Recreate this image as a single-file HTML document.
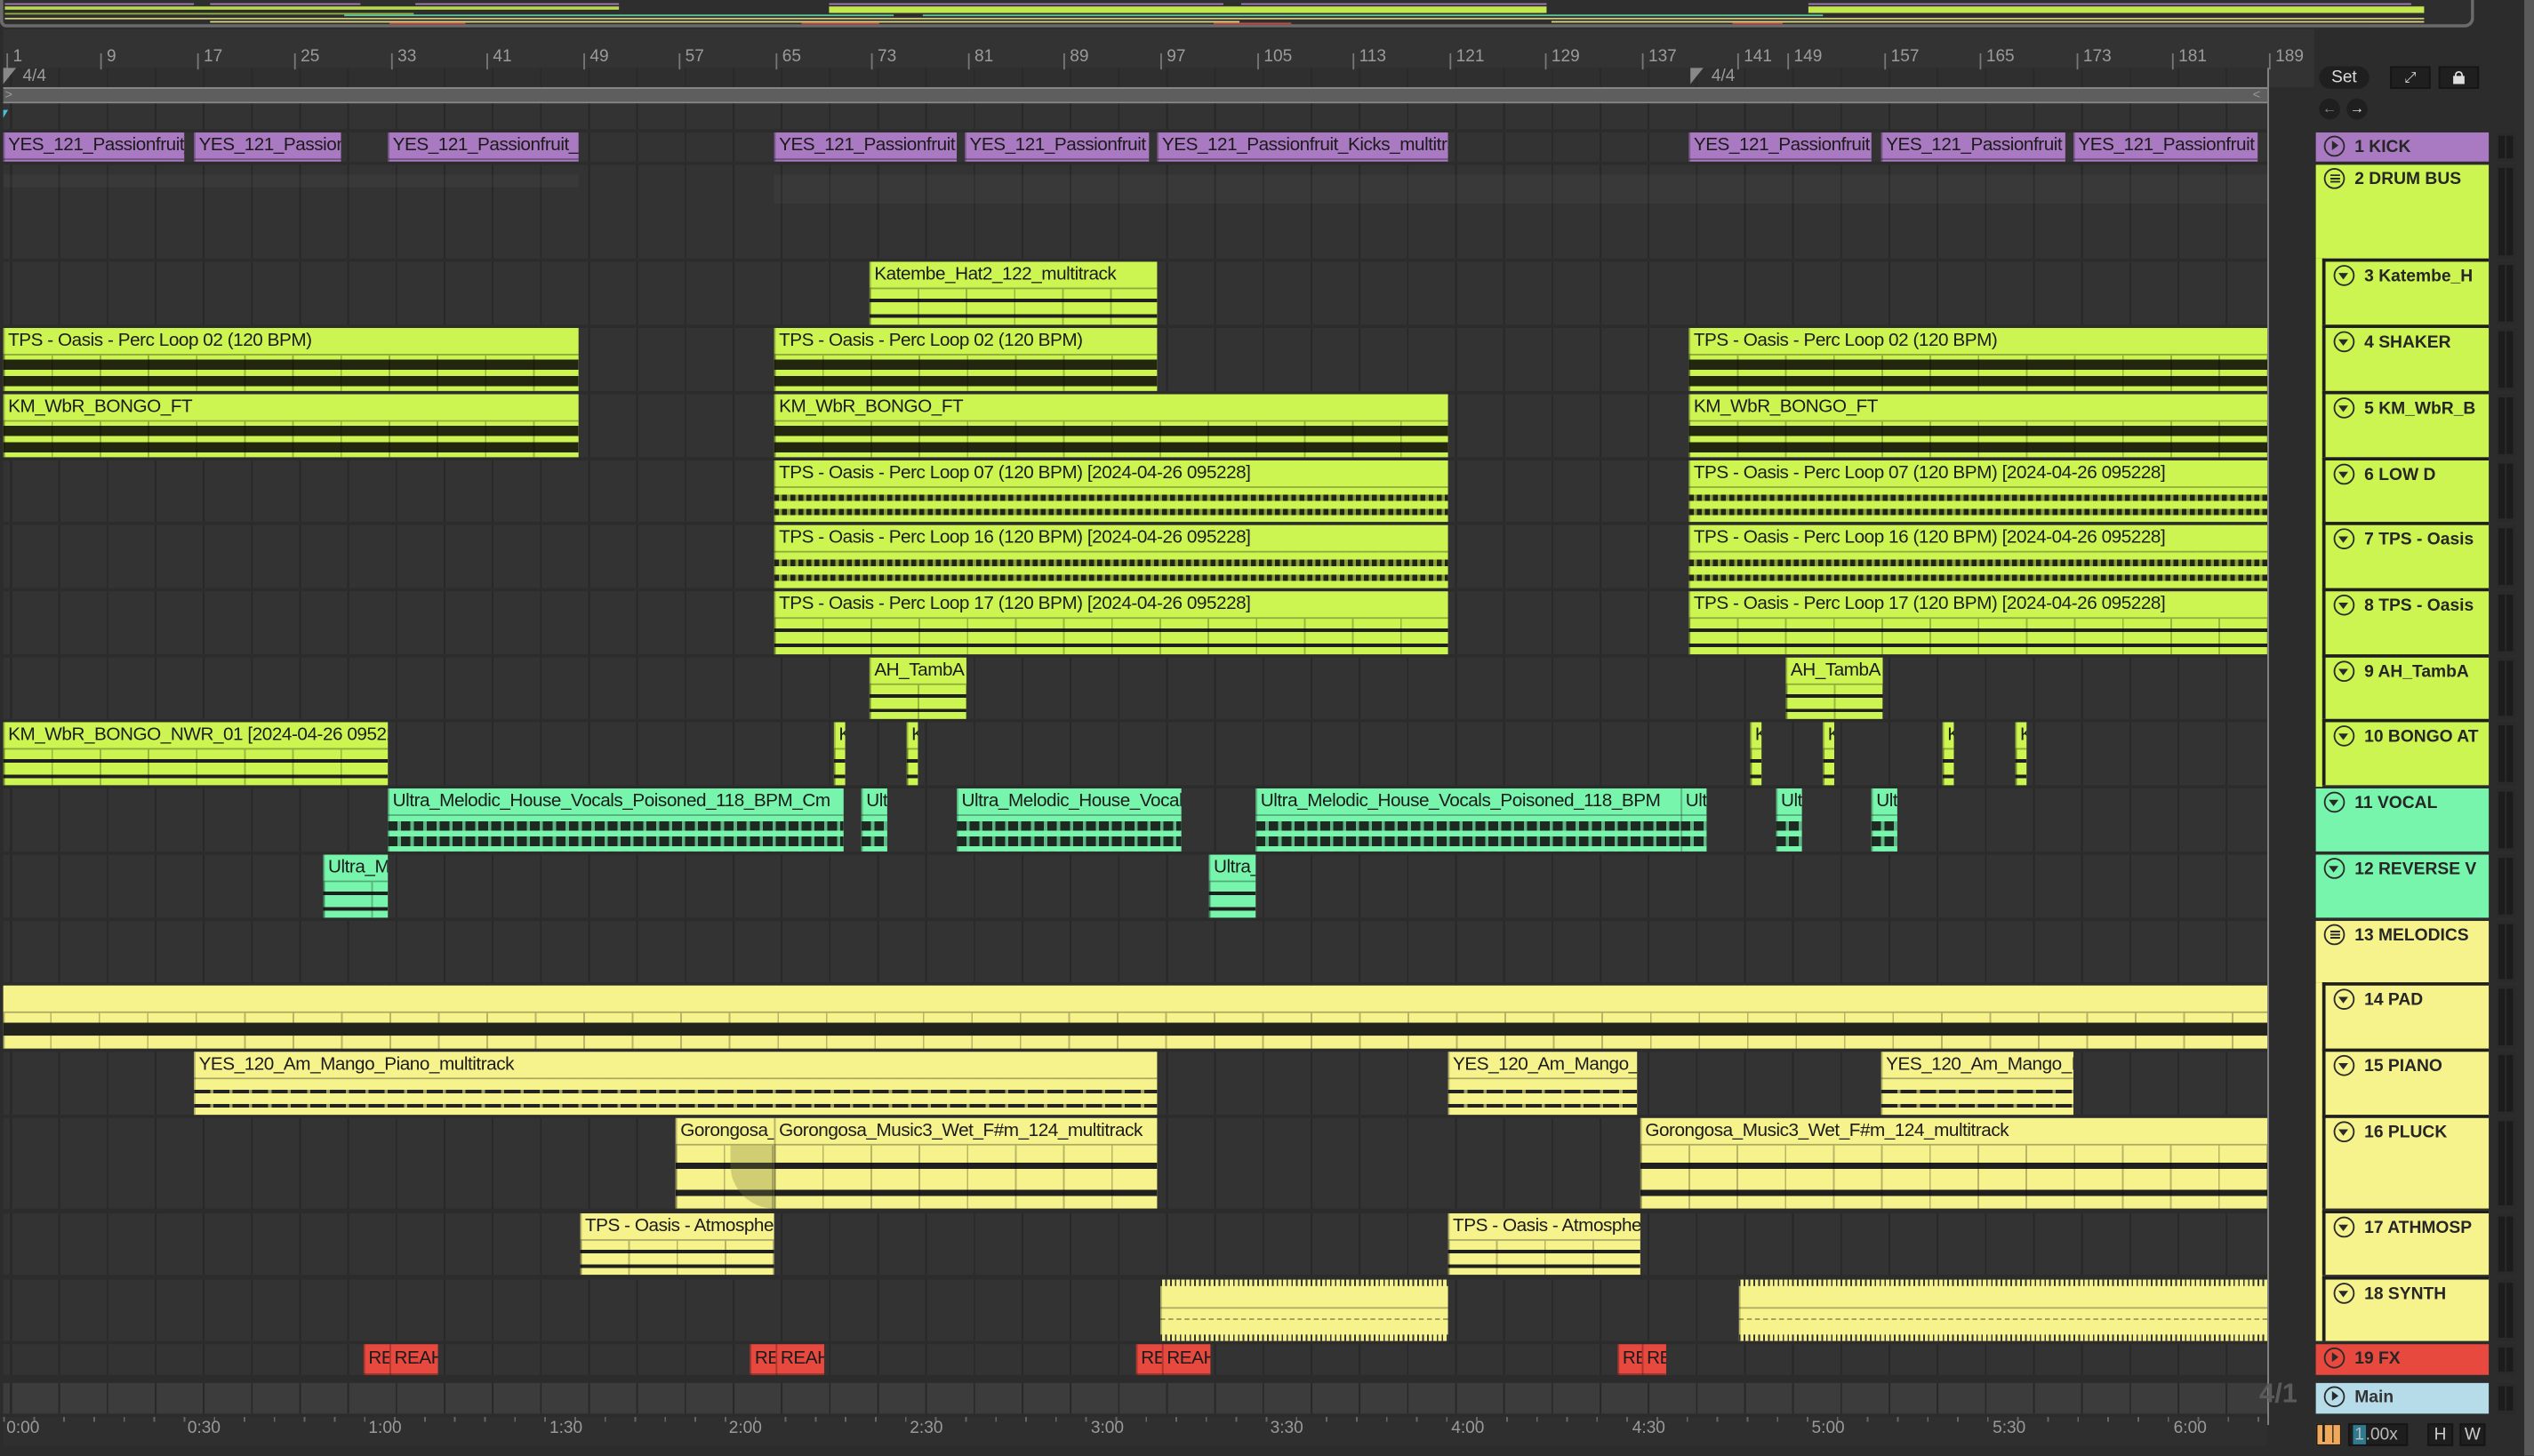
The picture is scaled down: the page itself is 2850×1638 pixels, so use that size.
<!DOCTYPE html>
<html><head><meta charset="utf-8"><style>
*{margin:0;padding:0;box-sizing:border-box}
html,body{width:2850px;height:1638px;overflow:hidden;background:#2c2c2c}
#s{position:absolute;left:0;top:0;width:1568px;height:901.2px;transform:scale(1.81760);transform-origin:0 0;background:#2c2c2c;font-family:"Liberation Sans",sans-serif;overflow:hidden}
.a{position:absolute}
.lane{position:absolute;left:2px;width:1401px;background-color:#333;background-image:repeating-linear-gradient(90deg,#282828 0 1px,transparent 1px 29.8px);background-position:4.4px 0}
.c{position:absolute;overflow:hidden;box-shadow:inset 1px 0 0 rgba(0,0,0,.25)}
.h{position:absolute;left:0;right:0;top:0;height:17px;line-height:17px;font-size:11.4px;color:#1b1b1b;padding-left:3px;white-space:nowrap;border-bottom:1px solid rgba(0,0,0,.3);letter-spacing:-.25px}
.w{position:absolute;left:0;right:0;top:17px;bottom:0}
.P{background:#a979c1}.L{background:#cdf552}.G{background:#78f5ac}.Y{background:#f6f28c}.R{background:#e8493f}
.wd{background-image:repeating-linear-gradient(90deg,rgba(0,0,0,.25) 0 1px,transparent 1px 29.8px),linear-gradient(transparent 12%,#24270f 12% 40%,transparent 40% 58%,#24270f 58% 86%,transparent 86%)}
.wm{background-image:repeating-linear-gradient(90deg,transparent 0 3px,rgba(205,245,82,.6) 3px 5px),linear-gradient(transparent 20%,#202316 20% 38%,transparent 38% 62%,#202316 62% 80%,transparent 80%)}
.wt{background-image:repeating-linear-gradient(90deg,rgba(0,0,0,.25) 0 1px,transparent 1px 29.8px),linear-gradient(transparent 27%,#202020 27% 37%,transparent 37% 70%,#202020 70% 80%,transparent 80%)}
.wg{background-image:repeating-linear-gradient(90deg,transparent 0 6px,rgba(120,245,172,.7) 6px 8px),linear-gradient(transparent 15%,#1d2a22 15% 42%,transparent 42% 58%,#1d2a22 58% 85%,transparent 85%)}
.wy{background-image:repeating-linear-gradient(90deg,transparent 0 10px,rgba(246,242,140,.6) 10px 12px),linear-gradient(transparent 30%,#222 30% 40%,transparent 40% 70%,#222 70% 80%,transparent 80%)}
.th{position:absolute;left:1433px;width:107px;font-weight:bold;font-size:10.6px;color:#262626;white-space:nowrap}
.th span{position:absolute;top:3px;left:24px;line-height:12px}
.ic{position:absolute;left:5px;top:2px;width:13px;height:13px;border:1.3px solid #2a2a2a;border-radius:50%}
.ic.d::after{content:"";position:absolute;left:2.4px;top:3.5px;border-left:3.4px solid transparent;border-right:3.4px solid transparent;border-top:4.5px solid #2a2a2a}
.ic.p::after{content:"";position:absolute;left:4px;top:2.3px;border-top:3.2px solid transparent;border-bottom:3.2px solid transparent;border-left:4.6px solid #2a2a2a}
.ic.g::after{content:"";position:absolute;left:3px;top:3px;width:6px;height:5px;background:linear-gradient(#2a2a2a 0 1px,transparent 1px 2px,#2a2a2a 2px 3px,transparent 3px 4px,#2a2a2a 4px 5px)}
.ch{border-left:2px solid #1e1e1e;border-top:2px solid #1e1e1e;left:1437px;width:103px}
.m{position:absolute;left:1545px;width:12px;background:#2a2a2a}
.m::before,.m::after{content:"";position:absolute;top:2px;bottom:2px;width:4px;background:#1c1c1c}
.m::before{left:1px}.m::after{left:6px}
.rl{position:absolute;top:29px;font-size:10.5px;color:#9b9b9b}
.rl::before{content:"";position:absolute;left:-4px;top:4px;width:1px;height:10px;background:#777}
.tl{position:absolute;top:878px;font-size:10.5px;color:#9a9a9a}
</style></head><body><div id="s">

<div class="a" style="left:0;top:0;width:1531px;height:17px;border:2px solid #6a6a6a;border-top:none;border-radius:0 0 6px 4px;background:#2e2e2e"></div>
<div class="a" style="left:3px;top:2px;width:117px;height:1px;background:#a979c1"></div>
<div class="a" style="left:130px;top:2px;width:93px;height:1px;background:#a979c1"></div>
<div class="a" style="left:257px;top:2px;width:126px;height:1px;background:#a979c1"></div>
<div class="a" style="left:513px;top:2px;width:244px;height:1px;background:#a979c1"></div>
<div class="a" style="left:768px;top:2px;width:189px;height:1px;background:#a979c1"></div>
<div class="a" style="left:1119px;top:2px;width:373px;height:1px;background:#a979c1"></div>
<div class="a" style="left:3px;top:4px;width:380px;height:2px;background:#b6d84a"></div>
<div class="a" style="left:513px;top:4px;width:444px;height:4px;background:#c3e84e"></div>
<div class="a" style="left:1119px;top:4px;width:381px;height:4px;background:#c3e84e"></div>
<div class="a" style="left:3px;top:7.5px;width:253px;height:1px;background:#93b03c"></div>
<div class="a" style="left:213px;top:9px;width:340px;height:1px;background:#5fc99a"></div>
<div class="a" style="left:571px;top:9px;width:557px;height:1px;background:#5fc99a"></div>
<div class="a" style="left:3px;top:11px;width:1497px;height:1px;background:#c9c67a"></div>
<div class="a" style="left:130px;top:12.5px;width:637px;height:1px;background:#d8d47e"></div>
<div class="a" style="left:960px;top:12.5px;width:540px;height:1px;background:#d8d47e"></div>
<div class="a" style="left:241px;top:14px;width:47px;height:1px;background:#c4453c"></div>
<div class="a" style="left:496px;top:14px;width:48px;height:1px;background:#c4453c"></div>
<div class="a" style="left:751px;top:14px;width:48px;height:1px;background:#c4453c"></div>
<div class="a" style="left:1072px;top:14px;width:31px;height:1px;background:#c4453c"></div>

<div class="a" style="left:2px;top:18px;width:1430px;height:36px;background:#333"></div>
<div class="a" style="left:2px;top:42px;width:1401px;height:12px;background:#2f2f2f;background-image:repeating-linear-gradient(90deg,#292929 0 1px,transparent 1px 29.8px);background-position:4.4px 0"></div>
<div class="rl" style="left:8px">1</div><div class="rl" style="left:66px">9</div><div class="rl" style="left:126px">17</div><div class="rl" style="left:186px">25</div><div class="rl" style="left:246px">33</div><div class="rl" style="left:305px">41</div><div class="rl" style="left:365px">49</div><div class="rl" style="left:424px">57</div><div class="rl" style="left:484px">65</div><div class="rl" style="left:543px">73</div><div class="rl" style="left:603px">81</div><div class="rl" style="left:662px">89</div><div class="rl" style="left:722px">97</div><div class="rl" style="left:782px">105</div><div class="rl" style="left:841px">113</div><div class="rl" style="left:901px">121</div><div class="rl" style="left:960px">129</div><div class="rl" style="left:1020px">137</div><div class="rl" style="left:1079px">141</div><div class="rl" style="left:1110px">149</div><div class="rl" style="left:1170px">157</div><div class="rl" style="left:1229px">165</div><div class="rl" style="left:1289px">173</div><div class="rl" style="left:1348px">181</div><div class="rl" style="left:1408px">189</div>
<div class="a" style="left:14px;top:41px;font-size:10.5px;color:#9b9b9b">4/4</div>
<div class="a" style="left:1059px;top:41px;font-size:10.5px;color:#9b9b9b">4/4</div>
<div class="a" style="left:2px;top:42px;border-left:8px solid #888;border-bottom:10px solid transparent"></div>
<div class="a" style="left:1046px;top:42px;border-left:8px solid #888;border-bottom:10px solid transparent"></div>
<div class="a" style="left:2px;top:54px;width:1401px;height:10px;background:#5e5e5e;border-top:1px solid #8a8a8a;border-bottom:1px solid #8a8a8a"></div>
<div class="a" style="left:3px;top:55px;font-size:8px;color:#999;line-height:8px">&gt;</div>
<div class="a" style="left:1394px;top:55px;font-size:8px;color:#999;line-height:8px">&lt;</div>
<div class="lane" style="top:64px;height:16px"></div>
<div class="a" style="left:2px;top:68px;border-top:5px solid #4ac0d8;border-right:3px solid transparent"></div>

<div class="a" style="left:1435px;top:41px;width:31px;height:14px;border-radius:7px;background:#1f1f1f;color:#ddd;font-size:10.5px;text-align:center;line-height:14px">Set</div>
<div class="a" style="left:1479px;top:41px;width:25px;height:14px;background:#1f1f1f;border:1px solid #151515;color:#ddd;font-size:9px;text-align:center;line-height:12px">&#x2922;</div>
<div class="a" style="left:1509px;top:41px;width:25px;height:14px;background:#1f1f1f;border:1px solid #151515"><div class="a" style="left:8px;top:5px;width:7px;height:5px;background:#ddd"></div><div class="a" style="left:9px;top:2px;width:5px;height:5px;border:1.3px solid #ddd;border-bottom:none;border-radius:3px 3px 0 0"></div></div>
<div class="a" style="left:1435px;top:61px;width:13px;height:13px;border-radius:50%;background:#1f1f1f;color:#888;font-size:9px;text-align:center;line-height:13px">&#x2190;</div>
<div class="a" style="left:1452px;top:61px;width:13px;height:13px;border-radius:50%;background:#1f1f1f;color:#eee;font-size:9px;text-align:center;line-height:13px">&#x2192;</div>

<div class="lane" style="top:82px;height:18px"></div>
<div class="lane" style="top:102px;height:58px"></div>
<div class="a" style="left:2px;top:108px;width:356px;height:8px;background:rgba(255,255,255,.03)"></div>
<div class="a" style="left:479px;top:108px;width:924px;height:18px;background:rgba(255,255,255,.03)"></div>
<div class="lane" style="top:162px;height:39px"></div>
<div class="lane" style="top:203px;height:39px"></div>
<div class="lane" style="top:244px;height:39px"></div>
<div class="lane" style="top:285px;height:38px"></div>
<div class="lane" style="top:325px;height:39px"></div>
<div class="lane" style="top:366px;height:39px"></div>
<div class="lane" style="top:407px;height:38px"></div>
<div class="lane" style="top:447px;height:39px"></div>
<div class="lane" style="top:488px;height:39px"></div>
<div class="lane" style="top:529px;height:39px"></div>
<div class="lane" style="top:570px;height:38px"></div>
<div class="lane" style="top:610px;height:39px"></div>
<div class="lane" style="top:651px;height:39px"></div>
<div class="lane" style="top:692px;height:56px"></div>
<div class="lane" style="top:751px;height:38px"></div>
<div class="lane" style="top:792px;height:38px"></div>
<div class="lane" style="top:832px;height:19px"></div>
<div class="lane" style="top:856px;height:19px;background-color:#3c3c3c"></div>

<div class="c P" style="left:2px;width:112px;top:82px;height:18px"><div class="h">YES_121_Passionfruit_Kicks</div></div>
<div class="c P" style="left:120px;width:91px;top:82px;height:18px"><div class="h">YES_121_Passionfruit</div></div>
<div class="c P" style="left:240px;width:118px;top:82px;height:18px"><div class="h">YES_121_Passionfruit_Kicks</div></div>
<div class="c P" style="left:479px;width:113px;top:82px;height:18px"><div class="h">YES_121_Passionfruit</div></div>
<div class="c P" style="left:597px;width:114px;top:82px;height:18px"><div class="h">YES_121_Passionfruit</div></div>
<div class="c P" style="left:716px;width:180px;top:82px;height:18px"><div class="h">YES_121_Passionfruit_Kicks_multitrack</div></div>
<div class="c P" style="left:1045px;width:113px;top:82px;height:18px"><div class="h">YES_121_Passionfruit</div></div>
<div class="c P" style="left:1164px;width:114px;top:82px;height:18px"><div class="h">YES_121_Passionfruit</div></div>
<div class="c P" style="left:1283px;width:114px;top:82px;height:18px"><div class="h">YES_121_Passionfruit</div></div>

<div class="c L" style="left:538px;width:178px;top:162px;height:39px"><div class="h">Katembe_Hat2_122_multitrack</div><div class="w wt"></div></div>
<div class="c L" style="left:2px;width:356px;top:203px;height:39px"><div class="h">TPS - Oasis - Perc Loop 02 (120 BPM)</div><div class="w wd"></div></div>
<div class="c L" style="left:479px;width:237px;top:203px;height:39px"><div class="h">TPS - Oasis - Perc Loop 02 (120 BPM)</div><div class="w wd"></div></div>
<div class="c L" style="left:1045px;width:358px;top:203px;height:39px"><div class="h">TPS - Oasis - Perc Loop 02 (120 BPM)</div><div class="w wd"></div></div>
<div class="c L" style="left:2px;width:356px;top:244px;height:39px"><div class="h">KM_WbR_BONGO_FT</div><div class="w wd"></div></div>
<div class="c L" style="left:479px;width:417px;top:244px;height:39px"><div class="h">KM_WbR_BONGO_FT</div><div class="w wd"></div></div>
<div class="c L" style="left:1045px;width:358px;top:244px;height:39px"><div class="h">KM_WbR_BONGO_FT</div><div class="w wd"></div></div>
<div class="c L" style="left:479px;width:417px;top:285px;height:38px"><div class="h">TPS - Oasis - Perc Loop 07 (120 BPM) [2024-04-26 095228]</div><div class="w wm"></div></div>
<div class="c L" style="left:1045px;width:358px;top:285px;height:38px"><div class="h">TPS - Oasis - Perc Loop 07 (120 BPM) [2024-04-26 095228]</div><div class="w wm"></div></div>
<div class="c L" style="left:479px;width:417px;top:325px;height:39px"><div class="h">TPS - Oasis - Perc Loop 16 (120 BPM) [2024-04-26 095228]</div><div class="w wm"></div></div>
<div class="c L" style="left:1045px;width:358px;top:325px;height:39px"><div class="h">TPS - Oasis - Perc Loop 16 (120 BPM) [2024-04-26 095228]</div><div class="w wm"></div></div>
<div class="c L" style="left:479px;width:417px;top:366px;height:39px"><div class="h">TPS - Oasis - Perc Loop 17 (120 BPM) [2024-04-26 095228]</div><div class="w wt"></div></div>
<div class="c L" style="left:1045px;width:358px;top:366px;height:39px"><div class="h">TPS - Oasis - Perc Loop 17 (120 BPM) [2024-04-26 095228]</div><div class="w wt"></div></div>
<div class="c L" style="left:538px;width:60px;top:407px;height:38px"><div class="h">AH_TambA</div><div class="w wt"></div></div>
<div class="c L" style="left:1105px;width:60px;top:407px;height:38px"><div class="h">AH_TambA</div><div class="w wt"></div></div>
<div class="c L" style="left:2px;width:238px;top:447px;height:39px"><div class="h">KM_WbR_BONGO_NWR_01 [2024-04-26 095228]</div><div class="w wt"></div></div>
<div class="c L" style="left:516px;width:7px;top:447px;height:39px"><div class="h">K</div><div class="w wt"></div></div>
<div class="c L" style="left:561px;width:7px;top:447px;height:39px"><div class="h">K</div><div class="w wt"></div></div>
<div class="c L" style="left:1083px;width:7px;top:447px;height:39px"><div class="h">K</div><div class="w wt"></div></div>
<div class="c L" style="left:1128px;width:7px;top:447px;height:39px"><div class="h">K</div><div class="w wt"></div></div>
<div class="c L" style="left:1202px;width:7px;top:447px;height:39px"><div class="h">K</div><div class="w wt"></div></div>
<div class="c L" style="left:1247px;width:7px;top:447px;height:39px"><div class="h">K</div><div class="w wt"></div></div>
<div class="c G" style="left:240px;width:282px;top:488px;height:39px"><div class="h">Ultra_Melodic_House_Vocals_Poisoned_118_BPM_Cm</div><div class="w wg"></div></div>
<div class="c G" style="left:533px;width:16px;top:488px;height:39px"><div class="h">Ultra</div><div class="w wg"></div></div>
<div class="c G" style="left:592px;width:139px;top:488px;height:39px"><div class="h">Ultra_Melodic_House_Vocals</div><div class="w wg"></div></div>
<div class="c G" style="left:777px;width:263px;top:488px;height:39px"><div class="h">Ultra_Melodic_House_Vocals_Poisoned_118_BPM</div><div class="w wg"></div></div>
<div class="c G" style="left:1040px;width:16px;top:488px;height:39px"><div class="h">Ultra</div><div class="w wg"></div></div>
<div class="c G" style="left:1099px;width:16px;top:488px;height:39px"><div class="h">Ultra</div><div class="w wg"></div></div>
<div class="c G" style="left:1158px;width:16px;top:488px;height:39px"><div class="h">Ultra</div><div class="w wg"></div></div>
<div class="c G" style="left:200px;width:40px;top:529px;height:39px"><div class="h">Ultra_Melodic</div><div class="w wt"></div></div>
<div class="c G" style="left:748px;width:29px;top:529px;height:39px"><div class="h">Ultra_Melodic</div><div class="w wt"></div></div>
<div class="c Y" style="left:2px;width:1401px;top:610px;height:39px;background-image:repeating-linear-gradient(90deg,transparent 0 29px,rgba(0,0,0,.25) 29px 30px)"><div class="a" style="left:0;right:0;top:0;height:17px;background:#f6f28c;border-bottom:1px solid rgba(0,0,0,.3)"></div><div class="a" style="left:0;right:0;top:23px;height:8px;background:#22231d"></div></div>
<div class="c Y" style="left:120px;width:596px;top:651px;height:39px"><div class="h">YES_120_Am_Mango_Piano_multitrack</div><div class="w wy"></div></div>
<div class="c Y" style="left:896px;width:117px;top:651px;height:39px"><div class="h">YES_120_Am_Mango_Piano</div><div class="w wy"></div></div>
<div class="c Y" style="left:1164px;width:119px;top:651px;height:39px"><div class="h">YES_120_Am_Mango_Piano</div><div class="w wy"></div></div>
<div class="c Y" style="left:418px;width:61px;top:692px;height:56px"><div class="h">Gorongosa_Music3</div><div class="w wt"></div><div class="a" style="left:34px;top:17px;width:27px;height:39px;background:rgba(120,120,60,.3);border-radius:0 0 0 30px"></div></div>
<div class="c Y" style="left:479px;width:237px;top:692px;height:56px"><div class="h">Gorongosa_Music3_Wet_F#m_124_multitrack</div><div class="w wt"></div></div>
<div class="c Y" style="left:1015px;width:388px;top:692px;height:56px"><div class="h">Gorongosa_Music3_Wet_F#m_124_multitrack</div><div class="w wt"></div></div>
<div class="c Y" style="left:359px;width:120px;top:751px;height:38px"><div class="h">TPS - Oasis - Atmosphere</div><div class="w wt"></div></div>
<div class="c Y" style="left:896px;width:119px;top:751px;height:38px"><div class="h">TPS - Oasis - Atmosphere</div><div class="w wt"></div></div>
<div class="c Y" style="left:718px;width:178px;top:792px;height:38px;background-image:repeating-linear-gradient(90deg,#333 0 1px,transparent 1px 3px);background-size:100% 4px;background-repeat:repeat-x"><div class="a" style="left:0;right:0;bottom:0;height:4px;background:repeating-linear-gradient(90deg,#333 0 1px,transparent 1px 3px)"></div><div class="a" style="left:0;right:0;top:17px;border-top:1px solid rgba(0,0,0,.3)"></div><div class="a" style="left:0;right:0;top:24px;border-top:1px dashed rgba(0,0,0,.35)"></div></div>
<div class="c Y" style="left:1076px;width:327px;top:792px;height:38px;background-image:repeating-linear-gradient(90deg,#333 0 1px,transparent 1px 3px);background-size:100% 4px;background-repeat:repeat-x"><div class="a" style="left:0;right:0;bottom:0;height:4px;background:repeating-linear-gradient(90deg,#333 0 1px,transparent 1px 3px)"></div><div class="a" style="left:0;right:0;top:17px;border-top:1px solid rgba(0,0,0,.3)"></div><div class="a" style="left:0;right:0;top:24px;border-top:1px dashed rgba(0,0,0,.35)"></div></div>
<div class="c R" style="left:225px;width:16px;top:832px;height:19px"><div class="h" style="height:19px;line-height:19px">RE</div></div>
<div class="c R" style="left:241px;width:30px;top:832px;height:19px"><div class="h" style="height:19px;line-height:19px">REAH</div></div>
<div class="c R" style="left:464px;width:16px;top:832px;height:19px"><div class="h" style="height:19px;line-height:19px">RE</div></div>
<div class="c R" style="left:480px;width:30px;top:832px;height:19px"><div class="h" style="height:19px;line-height:19px">REAH</div></div>
<div class="c R" style="left:703px;width:16px;top:832px;height:19px"><div class="h" style="height:19px;line-height:19px">RE</div></div>
<div class="c R" style="left:719px;width:30px;top:832px;height:19px"><div class="h" style="height:19px;line-height:19px">REAH</div></div>
<div class="c R" style="left:1001px;width:15px;top:832px;height:19px"><div class="h" style="height:19px;line-height:19px">RE</div></div>
<div class="c R" style="left:1016px;width:15px;top:832px;height:19px"><div class="h" style="height:19px;line-height:19px">RE</div></div>

<div class="a" style="left:1403px;top:42px;width:1px;height:840px;background:#888"></div>
<div class="a" style="left:1398px;top:853px;font-size:17px;font-weight:bold;color:#5a5a5a">4/1</div>

<div class="a" style="left:2px;top:877px;width:1401px;height:18px;background:#2f2f2f;background-image:repeating-linear-gradient(90deg,#666 0 1px,transparent 1px 18.6px);background-size:100% 3px;background-repeat:repeat-x"></div>
<div class="tl" style="left:4px">0:00</div><div class="tl" style="left:116px">0:30</div><div class="tl" style="left:228px">1:00</div><div class="tl" style="left:340px">1:30</div><div class="tl" style="left:451px">2:00</div><div class="tl" style="left:563px">2:30</div><div class="tl" style="left:675px">3:00</div><div class="tl" style="left:786px">3:30</div><div class="tl" style="left:898px">4:00</div><div class="tl" style="left:1010px">4:30</div><div class="tl" style="left:1121px">5:00</div><div class="tl" style="left:1233px">5:30</div><div class="tl" style="left:1345px">6:00</div>

<div class="th P" style="top:82px;height:18px"><div class="ic p"></div><span>1 KICK</span></div>
<div class="th L" style="top:102px;height:58px"><div class="ic g"></div><span>2 DRUM BUS</span></div>
<div class="a L" style="left:1433px;top:160px;width:4px;height:327px"></div>
<div class="th L ch" style="top:160px;height:41px"><div class="ic d"></div><span>3 Katembe_H</span></div>
<div class="th L ch" style="top:201px;height:41px"><div class="ic d"></div><span>4 SHAKER</span></div>
<div class="th L ch" style="top:242px;height:41px"><div class="ic d"></div><span>5 KM_WbR_B</span></div>
<div class="th L ch" style="top:283px;height:40px"><div class="ic d"></div><span>6 LOW D</span></div>
<div class="th L ch" style="top:323px;height:41px"><div class="ic d"></div><span>7 TPS - Oasis</span></div>
<div class="th L ch" style="top:364px;height:41px"><div class="ic d"></div><span>8 TPS - Oasis</span></div>
<div class="th L ch" style="top:405px;height:40px"><div class="ic d"></div><span>9 AH_TambA</span></div>
<div class="th L ch" style="top:445px;height:41px"><div class="ic d"></div><span>10 BONGO AT</span></div>
<div class="th G" style="top:488px;height:39px"><div class="ic d"></div><span>11 VOCAL</span></div>
<div class="th G" style="top:529px;height:39px"><div class="ic d"></div><span>12 REVERSE V</span></div>
<div class="th Y" style="top:570px;height:38px"><div class="ic g"></div><span>13 MELODICS</span></div>
<div class="a Y" style="left:1433px;top:608px;width:4px;height:222px"></div>
<div class="th Y ch" style="top:608px;height:41px"><div class="ic d"></div><span>14 PAD</span></div>
<div class="th Y ch" style="top:649px;height:41px"><div class="ic d"></div><span>15 PIANO</span></div>
<div class="th Y ch" style="top:690px;height:58px"><div class="ic d"></div><span>16 PLUCK</span></div>
<div class="th Y ch" style="top:749px;height:40px"><div class="ic d"></div><span>17 ATHMOSP</span></div>
<div class="th Y ch" style="top:790px;height:40px"><div class="ic d"></div><span>18 SYNTH</span></div>
<div class="th R" style="top:832px;height:19px"><div class="ic p"></div><span>19 FX</span></div>
<div class="th" style="top:856px;height:19px;background:#b5dce8"><div class="ic p"></div><span style="color:#333">Main</span></div>

<div class="m" style="top:82px;height:18px"></div><div class="m" style="top:102px;height:58px"></div><div class="m" style="top:162px;height:39px"></div><div class="m" style="top:203px;height:39px"></div><div class="m" style="top:244px;height:39px"></div><div class="m" style="top:285px;height:38px"></div><div class="m" style="top:325px;height:39px"></div><div class="m" style="top:366px;height:39px"></div><div class="m" style="top:407px;height:38px"></div><div class="m" style="top:447px;height:39px"></div><div class="m" style="top:488px;height:39px"></div><div class="m" style="top:529px;height:39px"></div><div class="m" style="top:570px;height:38px"></div><div class="m" style="top:610px;height:39px"></div><div class="m" style="top:651px;height:39px"></div><div class="m" style="top:692px;height:56px"></div><div class="m" style="top:751px;height:38px"></div><div class="m" style="top:792px;height:38px"></div><div class="m" style="top:832px;height:19px"></div><div class="m" style="top:856px;height:19px"></div>
<div class="a" style="left:1562px;top:0;width:6px;height:901px;background:#5a5a5a"></div>

<div class="a" style="left:1433px;top:881px;width:16px;height:14px;background:#f0a85a;border:1px solid #1a1a1a;color:#222;font-size:10px;text-align:center;line-height:12px">&#x2503;&#x2502;</div>
<div class="a" style="left:1453px;top:881px;width:37px;height:14px;background:#1e1e1e;border:1px solid #151515;font-size:10.5px;color:#bbb;line-height:12px;padding-left:2px"><span style="background:#2e7a90;padding:0 1px">1</span>.00x</div>
<div class="a" style="left:1502px;top:881px;width:16px;height:14px;background:#1e1e1e;border:1px solid #151515;font-size:10.5px;color:#ccc;text-align:center;line-height:12px">H</div>
<div class="a" style="left:1522px;top:881px;width:16px;height:14px;background:#1e1e1e;border:1px solid #151515;font-size:10.5px;color:#ccc;text-align:center;line-height:12px">W</div>
</div></body></html>
